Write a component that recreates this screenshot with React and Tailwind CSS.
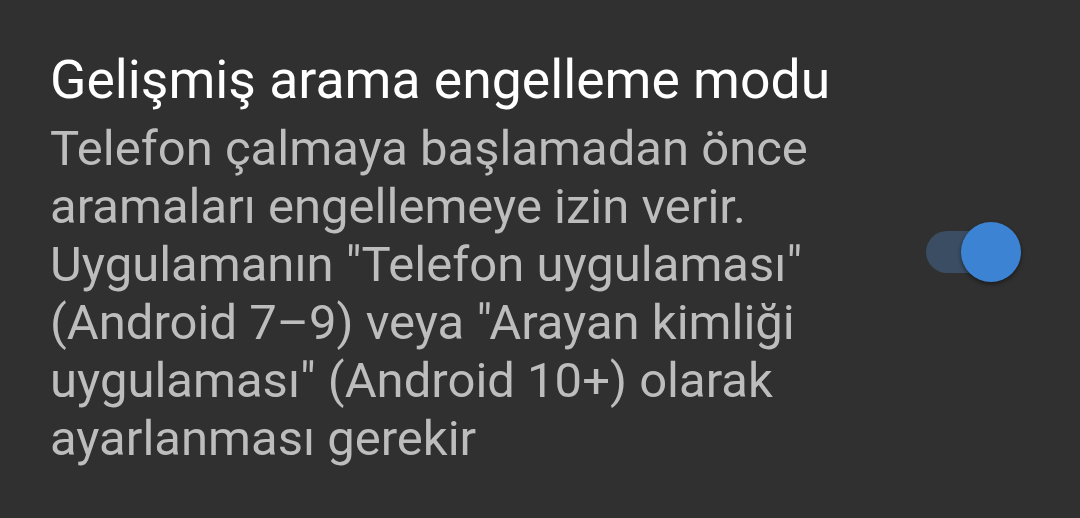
import React from 'react';

const lines = [
  'Telefon çalmaya başlamadan önce',
  'aramaları engellemeye izin verir.',
  'Uygulamanın "Telefon uygulaması"',
  '(Android 7–9) veya "Arayan kimliği',
  'uygulaması" (Android 10+) olarak',
  'ayarlanması gerekir',
];

function Toggle({ on = true }) {
  return (
    <button type="button" className="relative w-[96px] h-[60px] shrink-0 mt-[172px]">
      <span className="absolute left-[1px] top-[9px] w-[86px] h-[42px] rounded-full bg-[#3b4d63]" />
      <span
        className={
          on
            ? 'absolute right-0 top-0 w-[60px] h-[60px] rounded-full bg-[#3d83d3] shadow-[0_2px_4px_rgba(0,0,0,0.45)]'
            : 'absolute left-0 top-0 w-[60px] h-[60px] rounded-full bg-[#bdbdbd]'
        }
      />
    </button>
  );
}

export default function App() {
  return (
    <div className="w-[1080px] h-[518px] bg-[#303030] font-['Roboto',sans-serif] overflow-hidden">
      <div className="flex items-start pl-[50px] pr-[59px] pt-[50px]">
        <div className="flex-1 min-w-0">
          <div className="text-[53.5px] leading-[60px] text-white whitespace-nowrap">Gelişmiş arama engelleme modu</div>
          <div className="mt-[10px] text-[49px] leading-[58px] text-[#bdbdbd]">
            {lines.map(l => (
              <div key={l} className="whitespace-nowrap">{l}</div>
            ))}
          </div>
        </div>
        <Toggle />
      </div>
    </div>
  );
}
